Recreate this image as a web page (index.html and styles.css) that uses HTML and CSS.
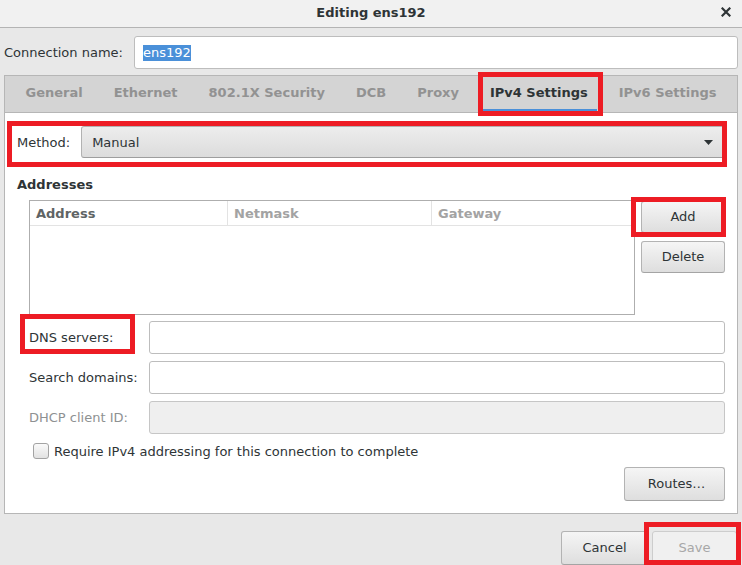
FILE: index.html
```html
<!DOCTYPE html>
<html lang="en">
<head>
<meta charset="utf-8">
<title>Editing ens192</title>
<link rel="stylesheet" href="styles.css">
</head>
<body>
<div class="window">
  <header class="titlebar">
    <span class="title">Editing ens192</span>
    <svg class="close" width="10" height="10" viewBox="0 0 10 10" aria-hidden="true">
      <path d="M1.5 1.5 L8.5 8.5 M8.5 1.5 L1.5 8.5" stroke="#2e3436" stroke-width="2.2" stroke-linecap="square"/>
    </svg>
  </header>

  <div class="conn-row">
    <span class="label">Connection name:</span>
    <div class="entry"><span class="selected">ens192</span></div>
  </div>

  <div class="notebook">
    <div class="tabs">
      <div class="tab"><span class="tab-label">General</span></div>
      <div class="tab"><span class="tab-label">Ethernet</span></div>
      <div class="tab"><span class="tab-label">802.1X Security</span></div>
      <div class="tab"><span class="tab-label">DCB</span></div>
      <div class="tab"><span class="tab-label">Proxy</span></div>
      <div class="tab active"><span class="tab-label">IPv4 Settings</span></div>
      <div class="tab"><span class="tab-label">IPv6 Settings</span></div>
    </div>

    <div class="page">
      <div class="method-row">
        <span class="label">Method:</span>
        <div class="combo">
          <span>Manual</span>
          <svg class="arrow" width="9" height="5" viewBox="0 0 9 5" aria-hidden="true"><path d="M0 0 H9 L4.5 5 Z" fill="#2e3436"/></svg>
        </div>
      </div>

      <div class="section-title">Addresses</div>

      <div class="addr-area">
        <div class="addr-table">
          <div class="addr-head">
            <div class="col col-main">Address</div>
            <div class="col">Netmask</div>
            <div class="col">Gateway</div>
          </div>
        </div>
        <div class="side-btns">
          <div class="btn btn-side">Add</div>
          <div class="btn btn-side btn-delete">Delete</div>
        </div>
      </div>

      <div class="form-grid">
        <span class="label">DNS servers:</span>
        <div class="entry"></div>
        <span class="label">Search domains:</span>
        <div class="entry"></div>
        <span class="label label-disabled">DHCP client ID:</span>
        <div class="entry entry-disabled"></div>
      </div>

      <div class="check-row">
        <span class="checkbox"></span>
        <span class="label">Require IPv4 addressing for this connection to complete</span>
      </div>

      <div class="routes-row">
        <div class="btn btn-routes">Routes…</div>
      </div>
    </div>
  </div>

  <div class="action-row">
    <div class="btn btn-cancel">Cancel</div>
    <div class="btn btn-save">Save</div>
  </div>

  <div class="annotations" aria-hidden="true">
    <div class="mark mark-tab"></div>
    <div class="mark mark-method"></div>
    <div class="mark mark-add"></div>
    <div class="mark mark-dns"></div>
    <div class="mark mark-save"></div>
  </div>
</div>
</body>
</html>
```

FILE: styles.css
```css
* {
  box-sizing: border-box;
}

html, body {
  margin: 0;
  padding: 0;
}

body {
  width: 742px;
  height: 565px;
  overflow: hidden;
  background: #e8e8e8;
  font-family: "DejaVu Sans", "Liberation Sans", sans-serif;
  font-size: 13px;
  color: #2e3436;
}

.window {
  position: relative;
  width: 742px;
  height: 565px;
}

/* Title bar */
.titlebar {
  height: 28px;
  background: #f1f1f1;
  border-bottom: 1px solid #b4b4b4;
  display: flex;
  align-items: center;
  justify-content: center;
  position: relative;
  padding-bottom: 2px;
}

.title {
  font-weight: bold;
  color: #2e3436;
}

.close {
  position: absolute;
  right: 11px;
  top: 7px;
}

/* Connection name row */
.conn-row {
  display: flex;
  align-items: center;
  gap: 11px;
  padding: 8px 4px 0 4px;
}

.label {
  white-space: nowrap;
}

.entry {
  height: 33px;
  background: #ffffff;
  border: 1px solid #bdbdbd;
  border-radius: 3px;
  display: flex;
  align-items: center;
}

.conn-row .entry {
  flex: 1;
  padding-left: 8px;
}

.selected {
  background: #4a90d9;
  color: #ffffff;
  line-height: 16px;
}

/* Notebook */
.notebook {
  margin: 6px 4px 0 4px;
  border: 1px solid #b6b6b6;
  background: #ffffff;
}

.tabs {
  height: 37px;
  background: #d4d4d4;
  border-bottom: 1px solid #b6b6b6;
  display: flex;
  padding-left: 5px;
  overflow: hidden;
}

.tab {
  display: flex;
  flex-shrink: 0;
  padding: 0 6.5px;
  white-space: nowrap;
}

.tab-label {
  display: flex;
  align-items: center;
  padding: 0 9px 1px 9px;
  font-weight: bold;
  color: #929292;
  border-bottom: 2px solid transparent;
  margin-bottom: 1px;
  white-space: nowrap;
}

.tab.active .tab-label {
  color: #2e3436;
  border-bottom-color: #4a90d9;
}

.page {
  padding: 13px 12px 12px 12px;
}

.method-row {
  display: flex;
  align-items: center;
  gap: 11px;
}

.combo {
  flex: 1;
  height: 32px;
  border: 1px solid #b2b2b2;
  border-bottom-color: #9e9e9e;
  border-radius: 3px;
  background: linear-gradient(#ededed, #dcdcdc);
  display: flex;
  align-items: center;
  justify-content: space-between;
  padding: 0 11px 0 10px;
}

.section-title {
  margin-top: 19px;
  font-weight: bold;
  line-height: 16px;
}

.addr-area {
  margin: 7px 0 0 12px;
  display: flex;
  gap: 6px;
}

.addr-table {
  width: 607px;
  height: 115px;
  border: 1px solid #aeaeae;
  background: #ffffff;
}

.addr-head {
  display: grid;
  grid-template-columns: 197px 204px 1fr;
  height: 25px;
  border-bottom: 1px solid #e3e3e3;
}

.col {
  display: flex;
  align-items: center;
  padding-left: 6px;
  font-weight: bold;
  color: #a3a3a3;
  border-left: 1px solid #e3e3e3;
}

.col-main {
  border-left: none;
  color: #5f6465;
}

.side-btns {
  display: flex;
  flex-direction: column;
  gap: 8px;
  padding-top: 1px;
}

.btn {
  display: flex;
  align-items: center;
  justify-content: center;
  border: 1px solid #b3b3b3;
  border-bottom-color: #a4a4a4;
  border-radius: 3px;
  background: linear-gradient(#f5f5f5, #dedede);
  color: #2e3436;
  padding-bottom: 1px;
}

.btn-side {
  width: 84px;
  height: 32px;
}

.form-grid {
  margin: 6px 0 0 12px;
  display: grid;
  grid-template-columns: 109px 1fr;
  column-gap: 11px;
  row-gap: 7px;
  align-items: center;
}

.label-disabled {
  color: #8e9192;
}

.entry-disabled {
  background: #efefef;
  border-color: #c6c6c6;
}

.check-row {
  margin: 9px 0 0 16px;
  display: flex;
  align-items: center;
  gap: 5px;
  height: 16px;
}

.checkbox {
  width: 16px;
  height: 16px;
  border: 1px solid #a3a3a3;
  border-radius: 3px;
  background: linear-gradient(#fafafa, #e2e2e2);
}

.routes-row {
  margin-top: 8px;
  display: flex;
  justify-content: flex-end;
}

.btn-routes {
  width: 101px;
  height: 34px;
  padding-left: 4px;
}

/* Bottom action row */
.action-row {
  display: flex;
  justify-content: flex-end;
  gap: 4px;
  padding: 17px 5px 0 0;
}

.btn-cancel {
  width: 87px;
  height: 34px;
}

.btn-save {
  width: 85px;
  height: 34px;
  background: #f0f0f0;
  border-color: #cdcdcd;
  color: #a7a7a7;
}

/* Red annotation marks drawn over the screenshot */
.annotations {
  position: absolute;
  inset: 0;
  pointer-events: none;
}

.mark {
  position: absolute;
  border: 5px solid #ed1c24;
}

.mark-tab {
  left: 478px;
  top: 72px;
  width: 125px;
  height: 44px;
}

.mark-method {
  left: 7px;
  top: 121px;
  width: 720px;
  height: 46px;
}

.mark-add {
  left: 631px;
  top: 197px;
  width: 95px;
  height: 40px;
}

.mark-dns {
  left: 20px;
  top: 314px;
  width: 115px;
  height: 40px;
}

.mark-save {
  left: 644px;
  top: 522px;
  width: 97px;
  height: 43px;
}
```
